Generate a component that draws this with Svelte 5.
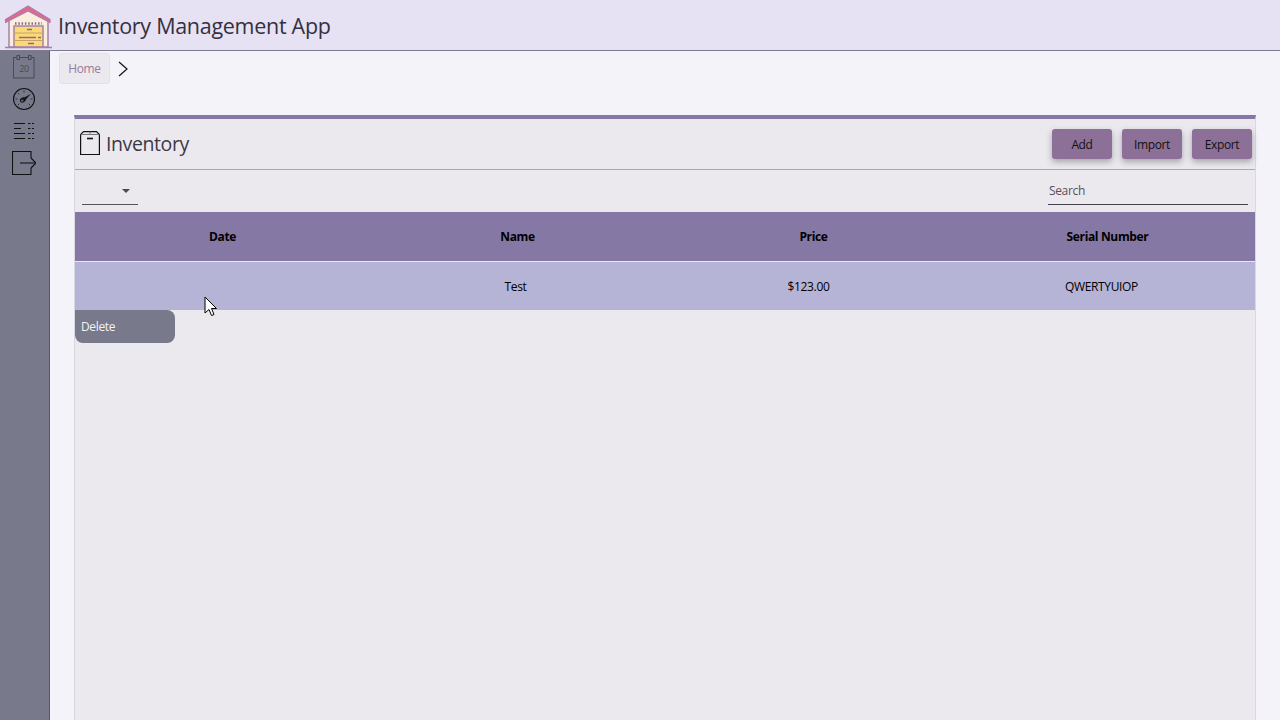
<script lang="ts">
  const columns = [
    { label: 'Date', value: '', head: 0, cell: 0 },
    { label: 'Name', value: 'Test', head: 0, cell: -2 },
    { label: 'Price', value: '$123.00', head: 1, cell: -4 },
    { label: 'Serial Number', value: 'QWERTYUIOP', head: 0, cell: -6 }
  ];
  const actions = ['Add', 'Import', 'Export'];
</script>

<div class="app">
  <header class="topbar">
    <svg class="logo" viewBox="0 0 48 46" width="48" height="46">
      <path d="M5 15 24 4l20 11v28H5z" fill="#f9eedd" stroke="#a681ad" stroke-width="1.5" />
      <path d="M1.500 15.500 24 2l22 13.500v3L24 7 1.500 18.500z" fill="#e0688f" stroke="#a681ad" stroke-width="1.2" stroke-linejoin="round" />
      <path d="M11 19.500h27" stroke="#8a6a8e" stroke-width="2.500" stroke-dasharray="1.500 1.800" />
      <rect x="10" y="22" width="29" height="21" fill="#fbd977" stroke="#a681ad" stroke-width="1.5" />
      <path d="M10 29h29M10 36.500h29" stroke="#c9a26a" stroke-width="1" />
      <path d="M23 25.500h5M15 33.500h17M34 33.500h3M24 39.500h6" stroke="#8a6a8e" stroke-width="1.300" />
      <path d="M1 43.500h47" stroke="#a681ad" stroke-width="1.500" />
    </svg>
    <h1>Inventory Management App</h1>
  </header>

  <div class="body">
    <nav class="sidebar">
      <svg viewBox="0 0 24 24" width="24" height="24" fill="none" stroke="#4a4b57" stroke-width="1">
        <rect x="1.500" y="2.500" width="20.500" height="20.500" />
        <rect x="5" y="0.500" width="2.500" height="4" fill="#787a8b" />
        <rect x="16.500" y="0.500" width="2.500" height="4" fill="#787a8b" />
        <text x="12" y="17" text-anchor="middle" class="cal">20</text>
      </svg>
      <svg viewBox="0 0 24 24" width="24" height="24" fill="none" stroke="#111" stroke-width="1.100">
        <circle cx="12" cy="12" r="10.500" />
        <path d="M12 3.500v2M6 6l1.300 1.300M3.500 12h2M20.500 12h-2M6 18l1.300-1.300M18 18l-1.300-1.300" stroke-width="1" stroke="#333" />
        <path d="M9 12.300 19 6.800 12.500 14.200z" fill="#1a1a22" stroke="none" />
        <ellipse cx="10.800" cy="13" rx="2.400" ry="1.900" transform="rotate(-35 10.800 13)" />
      </svg>
      <svg viewBox="0 0 24 24" width="24" height="24" fill="none" stroke="#111" stroke-width="1.100">
        <path d="M2 4.500h11M16 4.500h2.500M20 4.500h2M2 9.500h7M16 9.500h2.500M20 9.500h2M2 14.500h11M16 14.500h2.500M20 14.500h2M2 19.500h11M16 19.500h2.500M20 19.500h2" />
      </svg>
      <svg viewBox="0 0 24 24" width="24" height="24" fill="none" stroke="#111" stroke-width="1.100">
        <path d="M19 7V.500H.500v23h18.500V17" />
        <path d="M8 12h15" stroke="#3c3c48" stroke-width="1.800" />
        <path d="M19 7l5 5-5 5" stroke-width="1.200" />
      </svg>
    </nav>

    <main class="content">
      <div class="breadcrumb">
        <span class="crumb">Home</span>
        <svg viewBox="0 0 10 16" width="10" height="16" fill="none" stroke="#111" stroke-width="1.200">
          <path d="M1 1l8 7-8 7" />
        </svg>
      </div>

      <section class="card">
        <div class="card-head">
          <div class="card-title">
            <svg viewBox="0 0 20 24" width="20" height="24" fill="none" stroke="#111" stroke-width="1.200">
              <path d="M.600 23.500V3.500L3.500.600h13l2.900 2.900v20z" />
              <path d="M.600 3.500h18.800M10 .600v3" stroke="#77757f" stroke-width="1" />
              <path d="M7 7.500h6" stroke-width="1.600" />
            </svg>
            <h2>Inventory</h2>
          </div>
          <div class="actions">
            {#each actions as action}
              <button>{action}</button>
            {/each}
          </div>
        </div>

        <div class="toolbar">
          <div class="select"><span class="caret"></span></div>
          <div class="search">Search</div>
        </div>

        <div class="table">
          <div class="row head">
            {#each columns as col}
              <div class="cell"><span style="transform: translateX({col.head}px)">{col.label}</span></div>
            {/each}
          </div>
          <div class="row selected">
            {#each columns as col}
              <div class="cell"><span style="transform: translateX({col.cell}px)">{col.value}</span></div>
            {/each}
          </div>
          <div class="delete">Delete</div>
        </div>
      </section>
    </main>
  </div>

  <svg class="cursor" viewBox="0 0 13 21" width="13" height="21">
    <path d="M1 1v16l4-3.500 2.500 6 2.500-1-2.500-6H12.500z" fill="#fff" stroke="#000" stroke-width="1" />
  </svg>
</div>

<style>
  :global(body) {
    margin: 0;
    font-family: "Open Sans", "Noto Sans", sans-serif;
    background: #f4f3fa;
  }

  .app {
    position: relative;
    width: 1280px;
    height: 720px;
    overflow: hidden;
    display: flex;
    flex-direction: column;
    letter-spacing: -0.35px;
  }

  .topbar {
    height: 50px;
    flex: none;
    display: flex;
    align-items: center;
    gap: 6px;
    padding-left: 4px;
    background: #e6e1f3;
    border-bottom: 1px solid #7d7a8c;
  }

  .logo {
    margin-top: 4px;
  }

  h1 {
    margin: 0;
    font-size: 21.500px;
    font-weight: 400;
    letter-spacing: -0.28px;
    color: #34303f;
  }

  .body {
    flex: 1;
    display: flex;
    min-height: 0;
  }

  .sidebar {
    width: 48px;
    flex: none;
    display: flex;
    flex-direction: column;
    align-items: center;
    gap: 8px;
    padding: 4px 1px 0 0;
    background: #787a8b;
    border-right: 1px solid #55566a;
  }

  .cal {
    font-size: 9px;
    stroke: none;
    fill: #4a4b57;
  }

  .content {
    flex: 1;
    min-width: 0;
    display: flex;
    flex-direction: column;
    padding: 2px 24px 0 9px;
  }

  .breadcrumb {
    display: flex;
    align-items: center;
    gap: 8px;
    height: 31px;
    flex: none;
  }

  .crumb {
    width: 51px;
    height: 31px;
    box-sizing: border-box;
    display: flex;
    align-items: center;
    justify-content: center;
    font-size: 12px;
    color: #9a7a9f;
    background: #ebe9ee;
    border: 1px solid #e4e2e9;
    border-radius: 3px;
  }

  .card {
    flex: 1;
    margin: 31px 0 0 15px;
    display: flex;
    flex-direction: column;
    background: #ebe9ee;
    border: 1px solid #d9d8e0;
    border-top: 4px solid #8578a5;
    border-bottom: none;
  }

  .card-head {
    height: 51px;
    flex: none;
    box-sizing: border-box;
    display: flex;
    justify-content: space-between;
    align-items: flex-start;
    padding: 10px 3px 0 5px;
    border-bottom: 1px solid #aaa8b0;
  }

  .card-title {
    display: flex;
    align-items: center;
    gap: 6px;
    margin-top: 1px;
    height: 26px;
  }

  h2 {
    margin: 0;
    font-size: 19.500px;
    font-weight: 400;
    letter-spacing: -0.4px;
    color: #3c3846;
  }

  .actions {
    display: flex;
    gap: 10px;
  }

  button {
    width: 60px;
    height: 30px;
    padding: 0;
    border: none;
    border-radius: 3px;
    font: inherit;
    font-size: 12px;
    letter-spacing: -0.35px;
    color: #111;
    background: #8d7097;
    box-shadow: 0 3px 6px rgba(60, 60, 70, 0.4);
  }

  .toolbar {
    height: 42px;
    flex: none;
    box-sizing: border-box;
    display: flex;
    justify-content: space-between;
    padding: 0 7px;
  }

  .select {
    width: 56px;
    height: 35px;
    box-sizing: border-box;
    border-bottom: 1px solid #55535e;
    position: relative;
  }

  .caret {
    position: absolute;
    left: 40px;
    top: 19px;
    border: 4px solid transparent;
    border-top: 4px solid #4a4852;
    border-bottom: none;
  }

  .search {
    width: 200px;
    height: 35px;
    box-sizing: border-box;
    border-bottom: 1px solid #45434e;
    padding: 13px 0 0 1px;
    font-size: 12px;
    line-height: 16px;
    color: #55505c;
  }

  .table {
    position: relative;
    flex: 1;
  }

  .row {
    display: grid;
    grid-template-columns: 295px 295px 295px 295px;
    align-items: center;
    font-size: 12px;
    color: #000;
  }

  .head {
    height: 50px;
    box-sizing: border-box;
    background: #8578a5;
    font-weight: 700;
    border-bottom: 1px solid #e8e6f0;
  }

  .selected {
    height: 48px;
    background: #b5b3d6;
  }

  .cell {
    text-align: center;
  }

  .cell span {
    display: inline-block;
  }

  .delete {
    position: absolute;
    left: 0;
    top: 98px;
    width: 100px;
    height: 33px;
    box-sizing: border-box;
    padding-left: 6px;
    display: flex;
    align-items: center;
    font-size: 12px;
    color: #f2f2f6;
    background: #787a8b;
    border-radius: 0 8px 8px 8px;
  }

  .cursor {
    position: absolute;
    left: 204px;
    top: 296px;
  }
</style>
